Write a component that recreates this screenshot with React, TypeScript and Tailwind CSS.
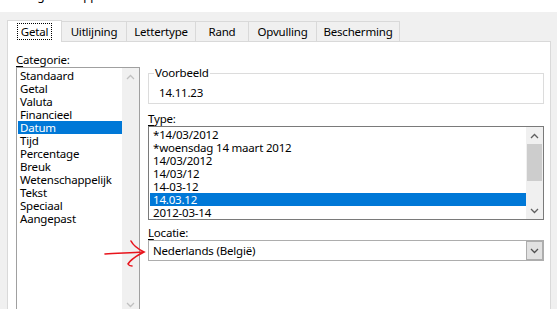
import React from 'react';

const categories = [
  'Standaard',
  'Getal',
  'Valuta',
  'Financieel',
  'Datum',
  'Tijd',
  'Percentage',
  'Breuk',
  'Wetenschappelijk',
  'Tekst',
  'Speciaal',
  'Aangepast',
];

const types = [
  '*14/03/2012',
  '*woensdag 14 maart 2012',
  '14/03/2012',
  '14/03/12',
  '14-03-12',
  '14.03.12',
  '2012-03-14',
];

// widths taken from the dialog's tab strip
const tabs = [
  { label: 'Uitlijning', w: 'w-[65px]' },
  { label: 'Lettertype', w: 'w-[69px]' },
  { label: 'Rand', w: 'w-[53px]' },
  { label: 'Opvulling', w: 'w-[68px]' },
  { label: 'Bescherming', w: 'w-[83px]' },
];

function Chevron({ up, color }: { up?: boolean; color: string }) {
  return (
    <svg width="9" height="6" viewBox="0 0 9 6" className="block">
      <path
        d={up ? 'M1 5 L4.5 1.5 L8 5' : 'M1 1 L4.5 4.5 L8 1'}
        fill="none"
        stroke={color}
        strokeWidth="1.3"
      />
    </svg>
  );
}

function Label({ first, rest }: { first: string; rest: string }) {
  return (
    <div className="h-[14px] leading-[14px]">
      <span className="underline underline-offset-2">{first}</span>
      {rest}
    </div>
  );
}

export default function App() {
  return (
    <div className="relative w-[557px] h-[309px] overflow-hidden bg-[#f0f0f0] font-['Noto_Sans',sans-serif] text-[11.5px] tracking-[-0.2px] text-black">
      {/* title bar, mostly scrolled off */}
      <div className="h-[12px] bg-white overflow-hidden flex items-start">
        <div className="ml-[11px] -mt-[11px] leading-[14px] text-[12px]">Celeigenschappen</div>
        <div className="ml-auto mr-[60px] -mt-[11px] leading-[14px] text-[12px]">?</div>
        <div className="mr-[16px] -mt-[11px] leading-[14px] text-[13px]">×</div>
      </div>

      {/* tabs */}
      <div className="flex items-end pl-[7px] h-[29px]">
        <div className="h-[22px] w-[55px] bg-white border border-b-0 border-[#d9d9d9] flex items-center justify-center relative z-10 -mb-[1px]">
          <span className="px-[2px] leading-[13px] outline outline-1 outline-dotted outline-black outline-offset-[1px]">
            Getal
          </span>
        </div>
        {tabs.map((t) => (
          <div
            key={t.label}
            className={
              t.w +
              ' h-[20px] bg-[#f0f0f0] border-t border-r border-[#d9d9d9] flex items-center justify-center leading-none'
            }
          >
            {t.label}
          </div>
        ))}
      </div>

      {/* panel */}
      <div className="ml-[7px] w-[544px] h-[280px] bg-white border border-[#d9d9d9] flex">
        {/* left column */}
        <div className="ml-[8px] mt-[11px] w-[124px]">
          <Label first="C" rest="ategorie:" />
          <div className="h-[247px] border border-[#a0a0a0] flex">
            <div className="flex-1 pt-[1px] pl-[1px]">
              {categories.map((c) => (
                <div
                  key={c}
                  className={
                    'h-[13px] leading-[13px] pl-[2px] whitespace-nowrap ' +
                    (c === 'Datum' ? 'bg-[#0078d7] text-white' : '')
                  }
                >
                  {c}
                </div>
              ))}
            </div>
            <div className="w-[17px] bg-[#f0f0f0] flex flex-col justify-between">
              <div className="h-[17px] flex items-center justify-center">
                <Chevron up color="#c0c0c0" />
              </div>
              <div className="h-[17px] flex items-center justify-center">
                <Chevron color="#c0c0c0" />
              </div>
            </div>
          </div>
        </div>

        {/* right column */}
        <div className="ml-[8px] mt-[31px] w-[396px]">
          {/* Voorbeeld */}
          <div className="relative h-[31px] border border-[#dcdcdc]">
            <div className="absolute -top-[8px] left-[5px] bg-white px-[1px] leading-[14px]">Voorbeeld</div>
            <div className="pl-[10px] pt-[12px] leading-[14px]">14.11.23</div>
          </div>

          <div className="mt-[8px]">
            <Label first="T" rest="ype:" />
          </div>
          <div className="h-[94px] border border-[#7a7a7a] flex">
            <div className="flex-1 pt-[1px] pl-[1px]">
              {types.map((t) => (
                <div
                  key={t}
                  className={
                    'h-[13px] leading-[13px] pl-[3px] whitespace-nowrap ' +
                    (t === '14.03.12' ? 'bg-[#0078d7] text-white' : '')
                  }
                >
                  {t}
                </div>
              ))}
            </div>
            <div className="w-[17px] bg-[#f0f0f0] flex flex-col">
              <div className="h-[17px] flex items-center justify-center">
                <Chevron up color="#606060" />
              </div>
              <div className="mx-[1px] h-[37px] bg-[#cdcdcd]" />
              <div className="mt-auto h-[17px] flex items-center justify-center">
                <Chevron color="#606060" />
              </div>
            </div>
          </div>

          <div className="mt-[6px]">
            <Label first="L" rest="ocatie:" />
          </div>
          <div className="h-[21px] border border-[#adadad] flex items-stretch">
            <div className="flex-1 pl-[4px] flex items-center leading-none">Nederlands (België)</div>
            <div className="w-[17px] bg-[#e1e1e1] border border-[#adadad] flex items-center justify-center">
              <Chevron color="#505050" />
            </div>
          </div>
        </div>
      </div>

      {/* red hand-drawn annotation arrow */}
      <svg className="absolute left-[100px] top-[236px]" width="50" height="34" viewBox="0 0 50 34">
        <path d="M5 18 C 16 17, 30 17, 43 16" fill="none" stroke="#e8141c" strokeWidth="1.6" strokeLinecap="round" />
        <path d="M31 5 C 33 9, 36 12, 44 16 C 38 19, 31 23, 28 28 C 29 30, 31 30, 32 30" fill="none" stroke="#e8141c" strokeWidth="1.6" strokeLinecap="round" />
      </svg>
    </div>
  );
}
